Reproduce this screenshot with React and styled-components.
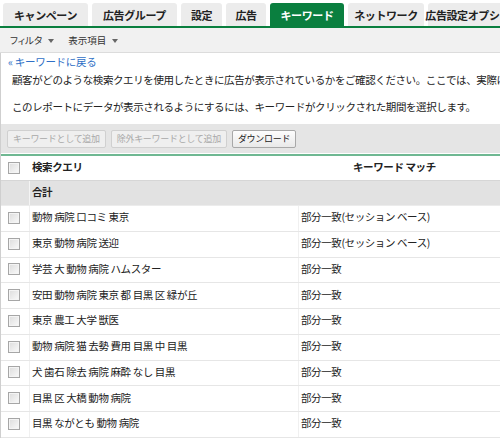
import React from "react";
import styled, { createGlobalStyle } from "styled-components";

const Global = createGlobalStyle`
  html, body { margin: 0; padding: 0; background: #fff; }
  body {
    font-family: "Noto Sans CJK JP", "Liberation Sans", sans-serif;
    font-size: 10.5px;
    color: #222;
    width: 500px;
    height: 440px;
    overflow: hidden;
  }
`;

const Page = styled.div`
  width: 500px;
  height: 440px;
  overflow: hidden;
  display: flex;
  flex-direction: column;
  & > * { flex-shrink: 0; }
`;

const TabBar = styled.div`
  display: flex;
  gap: 4px;
  padding: 3px 0 0 3px;
  border-bottom: 2px solid #0a7f3f;
  white-space: nowrap;
  overflow: hidden;
`;

const Tab = styled.div`
  flex: none;
  width: ${(p) => p.$w}px;
  height: 23px;
  display: flex;
  align-items: center;
  justify-content: center;
  border-radius: 3px 3px 0 0;
  font-weight: bold;
  font-size: 11px;
  letter-spacing: -0.4px;
  background: ${(p) => (p.$active ? "#0a7f3f" : "#ececec")};
  color: ${(p) => (p.$active ? "#fff" : "#222")};
`;

const Toolbar = styled.div`
  height: 24px;
  display: flex;
  align-items: center;
  gap: 14px;
  padding-left: 10px;
  background: #f1f1f1;
  border-bottom: 1px solid #dcdcdc;
  color: #333;
  font-size: 9.5px;
  font-feature-settings: "palt";
`;

const Menu = styled.span`
  display: inline-flex;
  align-items: center;
  gap: 6px;
  &::after {
    content: "";
    border-left: 3px solid transparent;
    border-right: 3px solid transparent;
    border-top: 4px solid #666;
    margin-top: 1px;
  }
`;

const Body = styled.div`
  border-left: 1px solid #cfcfcf;
  display: flex;
  flex-direction: column;
  & > * { flex-shrink: 0; }
`;

const BackLink = styled.a`
  display: block;
  color: #2f6fc6;
  text-decoration: none;
  padding: 1px 0 0 7px;
  height: 16px;
  line-height: 16px;
  font-size: 10.5px;
  letter-spacing: -0.3px;
`;

const Para = styled.p`
  margin: 0;
  padding-left: 11px;
  height: 27px;
  line-height: 20px;
  white-space: nowrap;
  overflow: hidden;
  letter-spacing: -0.4px;
  color: #222;
`;

const ButtonBand = styled.div`
  height: 29px;
  background: #e5e5e5;
  display: flex;
  align-items: center;
  gap: 5px;
  padding-left: 6px;
`;

const Btn = styled.button`
  height: 18px;
  padding: 0 5px;
  font-family: inherit;
  font-size: 9px;
  letter-spacing: -0.3px;
  border-radius: 2px;
  border: 1px solid ${(p) => (p.disabled ? "#d0d0d0" : "#a8a8a8")};
  background: ${(p) =>
    p.disabled ? "#efefef" : "linear-gradient(#fdfdfd, #e9e9e9)"};
  color: ${(p) => (p.disabled ? "#a9a9a9" : "#222")};
  line-height: 16px;
`;

const Table = styled.div`
  margin-top: 1px;
  border-top: 2px solid #6fb892;
  display: flex;
  flex-direction: column;
  & > * { flex-shrink: 0; }
`;

const Row = styled.div`
  display: grid;
  grid-template-columns: 29px 269px 1fr;
  height: ${(p) => p.$h}px;
  background: ${(p) => p.$bg || "#fff"};
  border-bottom: 1px solid ${(p) => p.$line || "#e9e9e9"};
  font-weight: ${(p) => (p.$bold ? "bold" : "normal")};
`;

const Cell = styled.div`
  display: flex;
  align-items: center;
  padding-left: ${(p) => p.$pl ?? 2}px;
  padding-bottom: 3px;
  white-space: nowrap;
  overflow: hidden;
  letter-spacing: -0.4px;
  border-right: ${(p) => (p.$divider ? "1px solid #f0f0f0" : "none")};
`;

const CheckCell = styled.div`
  display: flex;
  align-items: center;
  justify-content: center;
  padding-right: 3px;
  padding-bottom: 1px;
  border-right: 1px solid ${(p) => p.$divider || "#f0f0f0"};
`;

const Check = styled.span`
  width: 10px;
  height: 10px;
  border: 1px solid #a6a6a6;
  background: linear-gradient(135deg, #dcdcdc, #fafafa);
  box-shadow: inset 0 0 0 1px #f4f4f4;
`;

const rows = [
  ["動物 病院 口コミ 東京", "部分一致(セッション ベース)"],
  ["東京 動物 病院 送迎", "部分一致(セッション ベース)"],
  ["学芸 大 動物 病院 ハムスター", "部分一致"],
  ["安田 動物 病院 東京 都 目黒 区 緑が丘", "部分一致"],
  ["東京 農工 大学 獣医", "部分一致"],
  ["動物 病院 猫 去勢 費用 目黒 中 目黒", "部分一致"],
  ["犬 歯石 除去 病院 麻酔 なし 目黒", "部分一致"],
  ["目黒 区 大橋 動物 病院", "部分一致"],
  ["目黒 ながとも 動物 病院", "部分一致"],
];

const tabs = [
  ["キャンペーン", 85],
  ["広告グループ", 85],
  ["設定", 41],
  ["広告", 40],
  ["キーワード", 74, true],
  ["ネットワーク", 76],
  ["広告設定オプション", 90],
];

export default function App() {
  return (
    <Page>
      <Global />
      <TabBar>
        {tabs.map(([t, w, a]) => (
          <Tab key={t} $w={w} $active={a}>
            {t}
          </Tab>
        ))}
      </TabBar>
      <Toolbar>
        <Menu>フィルタ</Menu>
        <Menu>表示項目</Menu>
      </Toolbar>
      <Body>
        <BackLink href="#">« キーワードに戻る</BackLink>
        <Para>
          顧客がどのような検索クエリを使用したときに広告が表示されているかをご確認ください。ここでは、実際に広告が表示された検索クエリを確認できます。
        </Para>
        <Para>
          このレポートにデータが表示されるようにするには、キーワードがクリックされた期間を選択します。
        </Para>
        <ButtonBand>
          <Btn disabled>キーワードとして追加</Btn>
          <Btn disabled>除外キーワードとして追加</Btn>
          <Btn>ダウンロード</Btn>
        </ButtonBand>
        <Table>
          <Row $h={24} $bold $line="#d6d6d6">
            <CheckCell $divider="#fff">
              <Check />
            </CheckCell>
            <Cell>検索クエリ</Cell>
            <Cell $pl={54}>キーワード マッチ</Cell>
          </Row>
          <Row $h={24} $bold $bg="#e2e2e2" $line="#ececec">
            <CheckCell $divider="#f4f4f4" />
            <Cell>合計</Cell>
            <Cell />
          </Row>
          {rows.map(([q, m], i) => (
            <Row key={i} $h={24.75} $line="#e6e6e6">
              <CheckCell>
                <Check />
              </CheckCell>
              <Cell $divider>{q}</Cell>
              <Cell>{m}</Cell>
            </Row>
          ))}
        </Table>
      </Body>
    </Page>
  );
}
